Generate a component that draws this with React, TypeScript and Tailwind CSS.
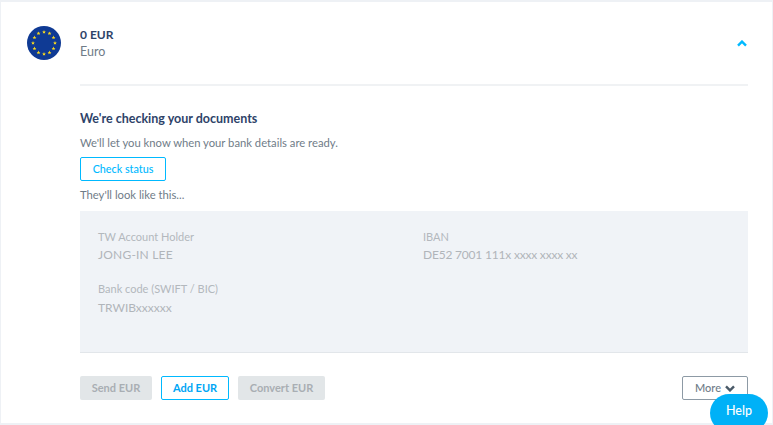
// 12 stars round the flag's centre
const stars = Array.from({ length: 12 }, (_, i) => {
  const a = (i * Math.PI) / 6;
  return { x: 17 + 11 * Math.sin(a), y: 17 - 11 * Math.cos(a) };
});

function EuFlag() {
  return (
    <svg width="34" height="34" viewBox="0 0 34 34" className="shrink-0">
      <circle cx="17" cy="17" r="17" fill="#0f3a94" />
      {stars.map((s, i) => (
        <polygon
          key={i}
          fill="#f7d81f"
          transform={`translate(${s.x} ${s.y}) scale(2)`}
          points="0,-1 0.29,-0.31 0.95,-0.31 0.47,0.12 0.59,0.81 0,0.45 -0.59,0.81 -0.47,0.12 -0.95,-0.31 -0.29,-0.31"
        />
      ))}
    </svg>
  );
}

function Chevron({ up, className }: { up?: boolean; className: string }) {
  return (
    <svg width="10" height="7" viewBox="0 0 10 7" className={className}>
      <path d={up ? 'M1 5.6 L5 1.6 L9 5.6' : 'M1 1.4 L5 5.4 L9 1.4'} fill="none" stroke="currentColor" strokeWidth="2.4" />
    </svg>
  );
}

function Field({ label, value, valueClass }: { label: string; value: string; valueClass: string }) {
  return (
    <div>
      <div className="text-[11px] leading-[16px] text-[#b3b8bd]">{label}</div>
      <div className={`text-[12px] leading-[18px] text-[#b0b5ba] ${valueClass}`}>{value}</div>
    </div>
  );
}

export default function App() {
  return (
    <div className="relative h-[425px] w-[773px] overflow-hidden bg-white font-['Lato',sans-serif]">
      <div className="h-[425px] border-x border-y-2 border-[#eef1f5]">
        {/* Header row */}
        <div className="flex items-start pl-[26px] pr-[25px] pt-[24px]">
          <EuFlag />
          <div className="ml-[19px] flex-1 pt-[1px]">
            <div className="text-[12px] font-bold leading-[16px] text-[#2e4369]">0 EUR</div>
            <div className="text-[12.5px] leading-[18px] text-[#6f7c88]">Euro</div>
          </div>
          <Chevron up className="mt-[14px] text-[#00b9ff]" />
        </div>

        <div className="ml-[79px] mr-[24px] mt-[23px] h-[2px] bg-[#f0f2f4]" />

        <div className="ml-[79px] mr-[24px]">
          <h2 className="mt-[24px] text-[12.5px] font-bold leading-[18px] text-[#2e4369]">
            We're checking your documents
          </h2>
          <p className="mt-[6px] text-[11.25px] leading-[18px] text-[#6f7c88]">
            We'll let you know when your bank details are ready.
          </p>
          <button className="mt-[5px] block h-[24px] w-[86px] rounded-[2px] border border-[#00b9ff] pt-[1px] text-[10.75px] font-medium text-[#00b9ff]">
            Check status
          </button>
          <p className="mt-[5px] text-[11.25px] leading-[18px] text-[#6f7c88]">They'll look like this...</p>

          {/* Bank details panel */}
          <div className="mt-[7px] h-[142px] border-b border-[#e2e6ea] bg-[#f0f3f7] px-[18px] pt-[18px]">
            <div className="grid grid-cols-[325px_1fr] gap-y-[17px]">
              <Field label="TW Account Holder" value="JONG-IN LEE" valueClass="mt-[1px] tracking-[0.2px]" />
              <Field label="IBAN" value="DE52 7001 111x xxxx xxxx xx" valueClass="mt-[1px] tracking-[-0.2px]" />
              <Field label="Bank code (SWIFT / BIC)" value="TRWIBxxxxxx" valueClass="mt-[2px]" />
            </div>
          </div>

          {/* Actions */}
          <div className="mt-[23px] flex items-center text-[11px] font-bold">
            <button className="h-[24px] w-[72px] rounded-[2px] bg-[#e2e6e8] pt-[1px] text-[#a9aeb3]">Send EUR</button>
            <button className="ml-[9px] h-[24px] w-[68px] rounded-[2px] border border-[#00b9ff] pt-[1px] text-[#00a6f5]">Add EUR</button>
            <button className="ml-[9px] h-[24px] w-[87px] rounded-[2px] bg-[#e2e6e8] pt-[1px] text-[#a9aeb3]">Convert EUR</button>
            <button className="ml-auto flex h-[24px] w-[66px] items-center justify-center gap-[4px] rounded-[2px] border border-[#8d9aa5] pt-[1px] font-medium text-[#6f7c88]">
              More <Chevron className="text-[#4a5a68]" />
            </button>
          </div>
        </div>
      </div>

      <div className="absolute left-[710px] top-[394px] flex h-[38px] w-[58px] items-center justify-center rounded-[19px] bg-[#00b1f7] pb-[3px] text-[12.5px] font-medium text-white">
        Help
      </div>
    </div>
  );
}
